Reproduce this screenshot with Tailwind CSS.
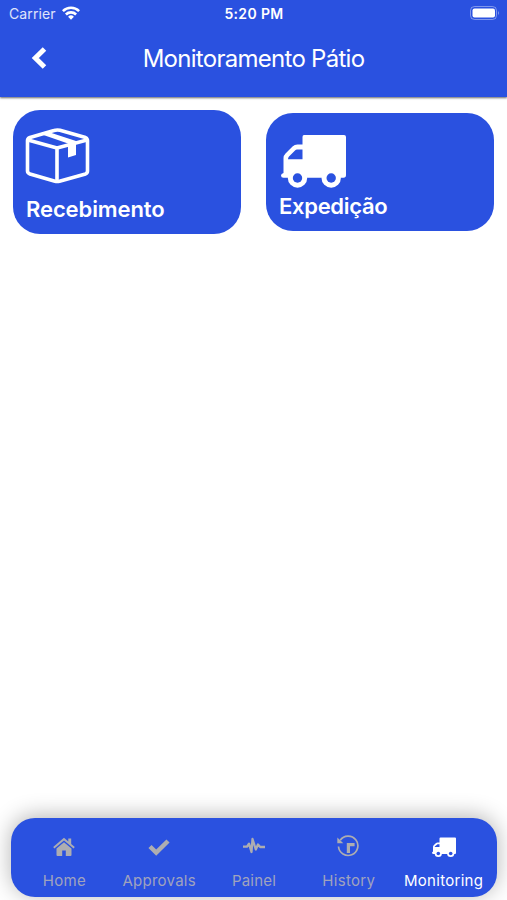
<!DOCTYPE html>
<html lang="pt-BR">
<head>
  <meta charset="UTF-8" />
  <meta name="viewport" content="width=device-width, initial-scale=1.0" />
  <title>Monitoramento Pátio</title>
  <script src="https://cdn.jsdelivr.net/npm/@tailwindcss/browser@4"></script>
</head>
<body class="bg-white h-[900px] flex flex-col overflow-hidden font-[Inter,sans-serif] text-white">
  <header class="h-[97px] shrink-0 bg-[#2a51e0] shadow-[0_1px_2px_rgba(0,0,0,0.6)]">
    <!-- status bar -->
    <div class="h-7 grid grid-cols-3 items-center pl-[9px] pr-[7px] text-sm">
      <div class="flex items-center gap-1.5 text-white/85">
        <span class="tracking-[0.1px]">Carrier</span>
        <svg class="w-[18px] h-[14px] -mt-0.5" viewBox="0 0 18 14" fill="none" stroke="white" stroke-width="2.6">
          <path d="M0.9 5.1a11.6 11.6 0 0 1 16.2 0" />
          <path d="M3.9 8.5a7.3 7.3 0 0 1 10.2 0" />
          <path d="M9 13.8l-2.9-3a4.1 4.1 0 0 1 5.8 0z" fill="white" stroke="none" />
        </svg>
      </div>
      <span class="text-center text-sm font-semibold tracking-[0.35px] -ml-px">5:20 PM</span>
      <svg class="w-[30px] h-[14px] justify-self-end -mt-0.5" viewBox="0 0 30 14">
        <rect x="0.5" y="0.5" width="26" height="13" rx="4" fill="none" stroke="white" stroke-opacity="0.4" />
        <rect x="2.5" y="2.5" width="22.5" height="9" rx="2" fill="white" />
        <path d="M28 4.8q1.8 2.2 0 4.4z" fill="white" fill-opacity="0.5" />
      </svg>
    </div>
    <!-- title -->
    <div class="h-[60px] grid grid-cols-[80px_1fr_80px] items-center pt-px">
      <svg class="w-4 h-[24px] ml-[31px] -mt-0.5" viewBox="0 0 16 24" fill="none" stroke="white" stroke-width="5">
        <path d="M13.5 3L4.3 12l9.2 9" />
      </svg>
      <h1 class="text-center text-2xl tracking-[-0.72px] whitespace-nowrap">Monitoramento Pátio</h1>
    </div>
  </header>

  <main class="flex-1 flex items-start justify-between px-[13px] pt-[13px]">
    <button class="w-[228px] h-[124px] rounded-[27px] bg-[#2a51e0] flex flex-col items-start pl-[13px] pt-[18px] text-left">
      <svg class="w-[65px] h-[56px] -ml-px" viewBox="0 0 65 56" fill="none" stroke="white" stroke-width="3.6" stroke-linejoin="round">
        <path d="M2.5 12.500Q2.500 10.500 5 9.500L29 2.500Q32 1.500 35 2.300L60.500 9.500Q62.500 10.500 62.500 12.500V43Q62.500 45 60.500 46L34.500 53.200Q32 53.800 30 53.200L5 46Q2.500 45 2.500 43z" />
        <path d="M3 12L32 20L62 12M32 20V53" />
        <path d="M17 6.500L25 4.500L51 13V27L43 29.500V15.500z" fill="white" stroke="none" />
      </svg>
      <span class="mt-[11px] text-[22px] leading-7 font-semibold tracking-[-0.1px]">Recebimento</span>
    </button>
    <button class="w-[228px] h-[118px] mt-[3px] rounded-[27px] bg-[#2a51e0] flex flex-col items-start pl-[13px] pt-[21px] text-left">
      <svg class="w-[66px] h-[54px] ml-px" viewBox="0 0 66 54" fill="white">
        <path fill-rule="evenodd" d="M24 1h40q2 0 2 2v38q0 2.800-2.500 2.800H3.500q-2.500 0-2.500-2.300 0-2 2.500-2.500V24q0-2.500 2-4.500l7-7q2-2 5-2h5V3q0-2 1.500-2zM8 25.200h14.500V15.500h-5.500q-1 0-2 1l-6 6q-1 1-1 2.700z" />
        <circle cx="17.500" cy="44" r="9.700" />
        <circle cx="51.200" cy="44" r="9.700" />
        <circle cx="17.500" cy="44" r="4.700" fill="#2a51e0" />
        <circle cx="51.200" cy="44" r="4.700" fill="#2a51e0" />
      </svg>
      <span class="mt-[4px] text-[22px] leading-7 font-semibold tracking-[-0.3px]">Expedição</span>
    </button>
  </main>

  <nav class="h-[79px] shrink-0 ml-[11px] mr-[10px] mb-[3px] px-[6px] rounded-[24px] bg-[#2a51e0] shadow-[0_-2px_22px_rgba(0,0,0,0.3)] grid grid-cols-5 text-[15px] leading-5 text-[#a0a3bd]">
    <a class="flex flex-col items-center pt-[18px] gap-[13px]">
      <svg class="w-[22px] h-[22px] shrink-0" viewBox="0 0 22 22" fill="#adadb1">
        <path d="M11 6.200L3.500 12.500v6.500q0 1 1 1h4.700v-5.500h3.600v5.500h4.700q1 0 1-1V12.500z" />
        <path d="M11 1.800L0.200 11l1.200 1.400L11 4.600l9.600 7.800 1.200-1.400-3.600-3.100V2.500h-2.900v2.900z" />
      </svg>
      <span class="tracking-[0.3px]">Home</span>
    </a>
    <a class="flex flex-col items-center pt-[18px] gap-[13px]">
      <svg class="w-[22px] h-[22px] shrink-0" viewBox="0 0 22 22" fill="none" stroke="#adadb1" stroke-width="4.500">
        <path d="M2 10.500l6.200 6L20 5" />
      </svg>
      <span class="tracking-[0.25px]">Approvals</span>
    </a>
    <a class="flex flex-col items-center pt-[18px] gap-[13px]">
      <svg class="w-[22px] h-[22px] shrink-0" viewBox="0 0 22 22" fill="none" stroke="#adadb1" stroke-width="2.300" stroke-linejoin="round">
        <path d="M0 10.700h4l2-3 2.500 8.300 1-13 3.300 10.500 2.200-5 2.200 2.500H22" />
      </svg>
      <span class="tracking-[0.2px]">Painel</span>
    </a>
    <a class="flex flex-col items-center pt-[17px] gap-[14px]">
      <svg class="w-[22px] h-[22px] shrink-0 -ml-0.5" viewBox="0 0 22 22" fill="none" stroke="#adadb1">
        <path d="M3.200 5.200A9.700 9.700 0 1 1 1.500 11.500" stroke-width="1.700" />
        <path d="M0.300 2.500v5.700h6z" fill="#adadb1" stroke="none" />
        <path d="M11.400 18V9.700h6.200" stroke-width="3.200" />
      </svg>
      <span class="tracking-[0.3px]">History</span>
    </a>
    <a class="flex flex-col items-center pt-[18px] gap-[13px] text-white">
      <svg class="w-[24px] h-[22px] shrink-0 ml-px" viewBox="0 0 24 22" fill="white">
        <path fill-rule="evenodd" d="M8.500 1.500H23q1 0 1 1V17q0 1-1 1H1.500Q0 18 0 16.500l1-1V11q0-1 .7-1.700L4 7q.6-.5 1.500-.5h2V2.500q0-1 1-1zM2.800 11h4.700V8.200h-2L2.800 10.500z" />
        <circle cx="6.300" cy="17.500" r="3.600" />
        <circle cx="18.700" cy="17.500" r="3.600" />
        <circle cx="6.300" cy="17.500" r="1.800" fill="#2a51e0" />
        <circle cx="18.700" cy="17.500" r="1.800" fill="#2a51e0" />
      </svg>
      <span class="tracking-[0.3px]">Monitoring</span>
    </a>
  </nav>
</body>
</html>
